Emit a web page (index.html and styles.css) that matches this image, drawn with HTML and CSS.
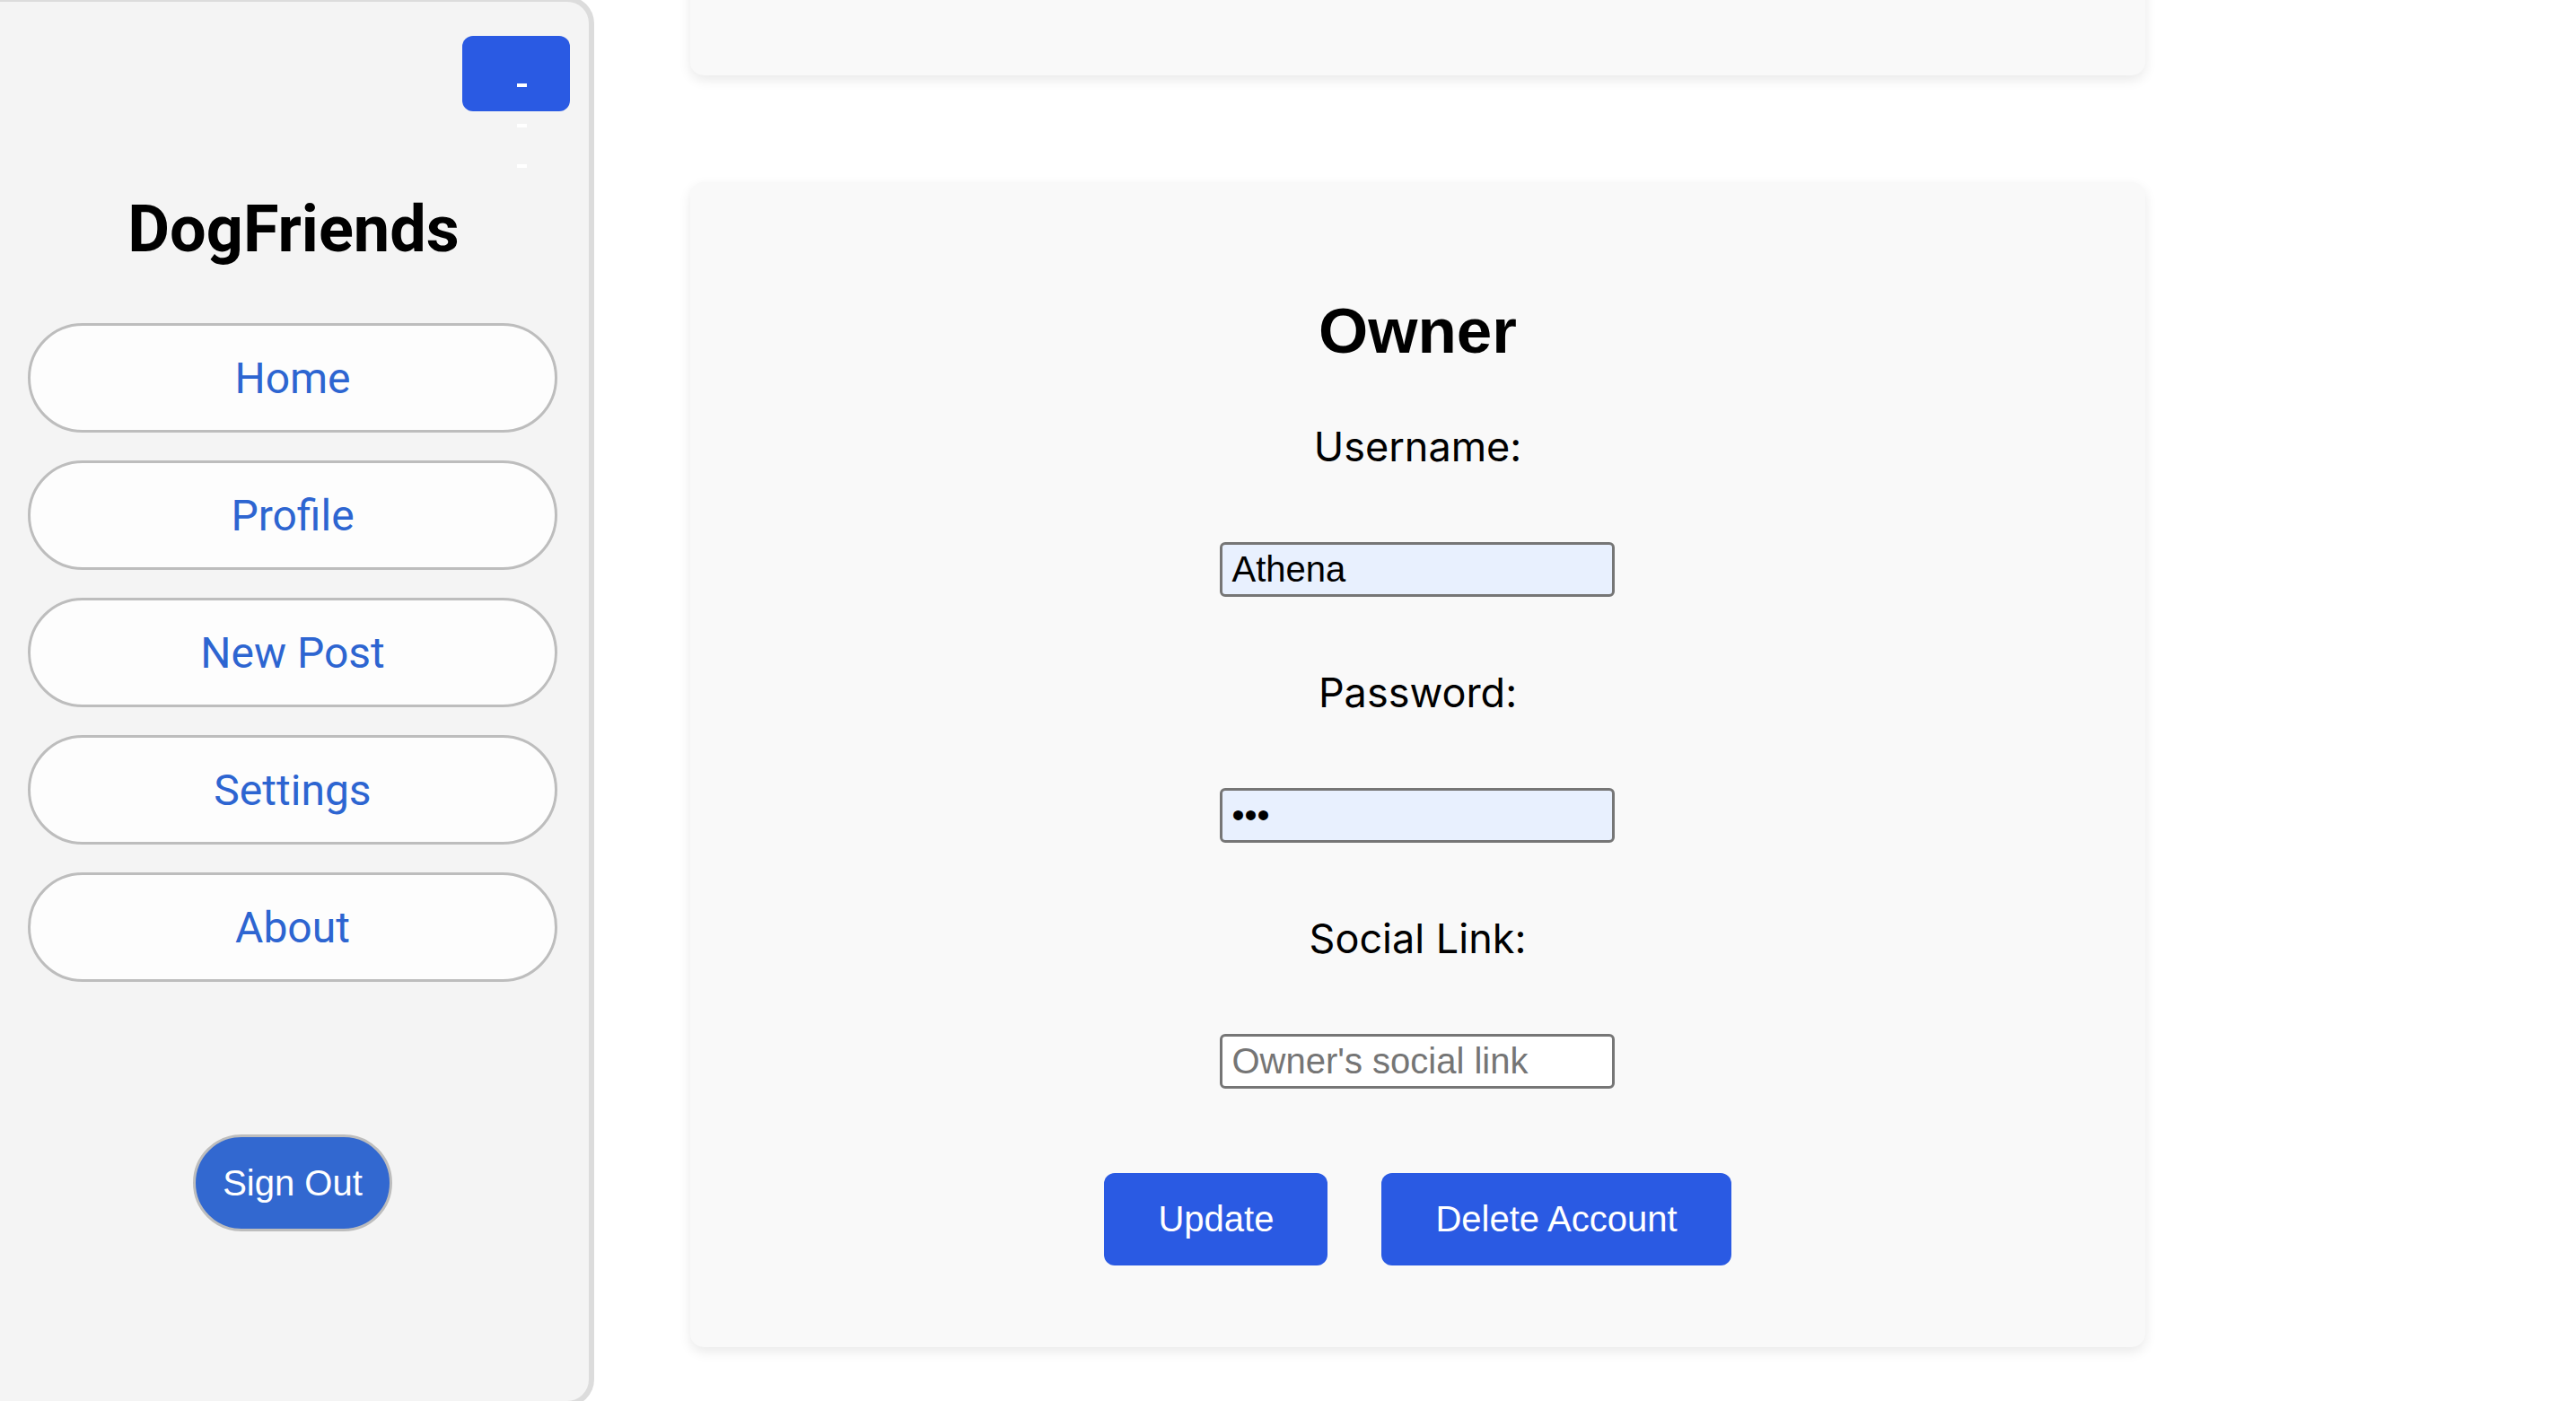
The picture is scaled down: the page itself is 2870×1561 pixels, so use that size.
FILE: index.html
```html
<!DOCTYPE html>
<html lang="en">
<head>
<meta charset="utf-8">
<title>DogFriends - Settings</title>
<link rel="stylesheet" href="styles.css">
</head>
<body>
<div class="layout">
  <aside class="sidebar">
    <div class="toggle-row">
      <button class="toggle" type="button" aria-label="Toggle menu">
        <span class="bar"></span>
        <span class="bar"></span>
        <span class="bar"></span>
      </button>
    </div>
    <h1 class="brand">DogFriends</h1>
    <nav class="nav">
      <a class="nav-btn" href="#">Home</a>
      <a class="nav-btn" href="#">Profile</a>
      <a class="nav-btn" href="#">New Post</a>
      <a class="nav-btn" href="#">Settings</a>
      <a class="nav-btn" href="#">About</a>
    </nav>
    <div class="signout-row">
      <button class="signout" type="button">Sign Out</button>
    </div>
  </aside>
  <main class="main">
    <section class="card card-top"></section>
    <section class="card card-form">
      <h2 class="card-title">Owner</h2>
      <form class="form">
        <label class="label" for="username">Username:</label>
        <input class="input filled" id="username" type="text" value="Athena">
        <label class="label" for="password">Password:</label>
        <input class="input filled" id="password" type="password" value="abc">
        <label class="label" for="social">Social Link:</label>
        <input class="input" id="social" type="text" placeholder="Owner's social link">
        <div class="actions">
          <button class="action-btn" type="button">Update</button>
          <button class="action-btn" type="button">Delete Account</button>
        </div>
      </form>
    </section>
  </main>
</div>
</body>
</html>
```
FILE: styles.css
```css
* {
  box-sizing: border-box;
}

html, body {
  margin: 0;
  padding: 0;
  background: #ffffff;
  overflow: hidden;
}

.layout {
  display: flex;
  align-items: flex-start;
  height: 1561px;
}

/* Sidebar */
.sidebar {
  flex: 0 0 662px;
  width: 662px;
  height: 1571px;
  margin-top: -4px;
  background: #f4f4f4;
  border: 6px solid #dcdcdc;
  border-left: 0;
  border-radius: 0 30px 30px 0;
  display: flex;
  flex-direction: column;
}

.toggle-row {
  display: flex;
  justify-content: flex-end;
  padding: 38px 21px 0 0;
}

.toggle {
  width: 120px;
  height: 84px;
  border: 0;
  border-radius: 12px;
  background: #2a5ae3;
  display: flex;
  flex-direction: column;
  align-items: center;
  justify-content: flex-start;
  gap: 41px;
  padding: 53px 0 0 12px;
  overflow: visible;
  cursor: pointer;
}

.bar {
  display: block;
  width: 11px;
  height: 4px;
  flex: 0 0 4px;
  background: #ffffff;
}

.brand {
  margin: 90px 0 0 0;
  padding-right: 2px;
  font-family: Roboto, "Liberation Sans", sans-serif;
  font-weight: 700;
  font-size: 72px;
  line-height: 84px;
  text-align: center;
  color: #000000;
}

.nav {
  margin-top: 62px;
  padding: 0 35px 0 31px;
  display: flex;
  flex-direction: column;
  gap: 31px;
}

.nav-btn {
  height: 122px;
  border: 3px solid #bdbdbd;
  border-radius: 61px;
  background: #fdfdfd;
  display: flex;
  align-items: center;
  justify-content: center;
  font-family: Roboto, "Liberation Sans", sans-serif;
  font-size: 48px;
  color: #2d65d1;
  text-decoration: none;
}

.signout-row {
  margin-top: 170px;
  display: flex;
  justify-content: center;
  padding-right: 4px;
}

.signout {
  height: 108px;
  padding: 0 30px;
  border: 3px solid #bdbdbd;
  border-radius: 54px;
  background: #3268d0;
  color: #ffffff;
  font-family: "Liberation Sans", Arial, sans-serif;
  font-size: 40px;
  cursor: pointer;
}

/* Main */
.main {
  flex: 1 1 auto;
  padding-left: 107px;
  display: flex;
  flex-direction: column;
}

.card {
  width: 1621px;
  background: #f9f9f9;
  border-radius: 15px;
  box-shadow: 0 5px 14px rgba(0, 0, 0, 0.09);
}

.card-top {
  height: 124px;
  margin-top: -40px;
}

.card-form {
  margin-top: 119px;
  padding: 126px 0 91px;
  display: flex;
  flex-direction: column;
  align-items: center;
}

.card-title {
  margin: 0;
  font-family: "Liberation Sans", Arial, sans-serif;
  font-weight: 700;
  font-size: 71px;
  line-height: 80px;
  color: #000000;
}

.form {
  margin-top: 62px;
  display: flex;
  flex-direction: column;
  align-items: center;
}

.label {
  font-family: Inter, "Noto Sans", sans-serif;
  font-size: 45px;
  line-height: 54px;
  color: #000000;
  margin-bottom: 79px;
}

.input {
  width: 440px;
  height: 61px;
  margin-bottom: 80px;
  padding: 0 10px;
  border: 3px solid #767676;
  border-radius: 6px;
  background: #ffffff;
  font-family: "Liberation Sans", Arial, sans-serif;
  font-size: 40px;
  color: #000000;
}

.input.filled {
  background: #e8f0fe;
}

.input::placeholder {
  color: #757575;
}

.actions {
  margin-top: 14px;
  display: flex;
  gap: 60px;
}

.action-btn {
  height: 103px;
  padding: 0 60px;
  border: 0;
  border-radius: 12px;
  background: #2a5ae3;
  color: #ffffff;
  font-family: "Liberation Sans", Arial, sans-serif;
  font-size: 40px;
  cursor: pointer;
}
```
